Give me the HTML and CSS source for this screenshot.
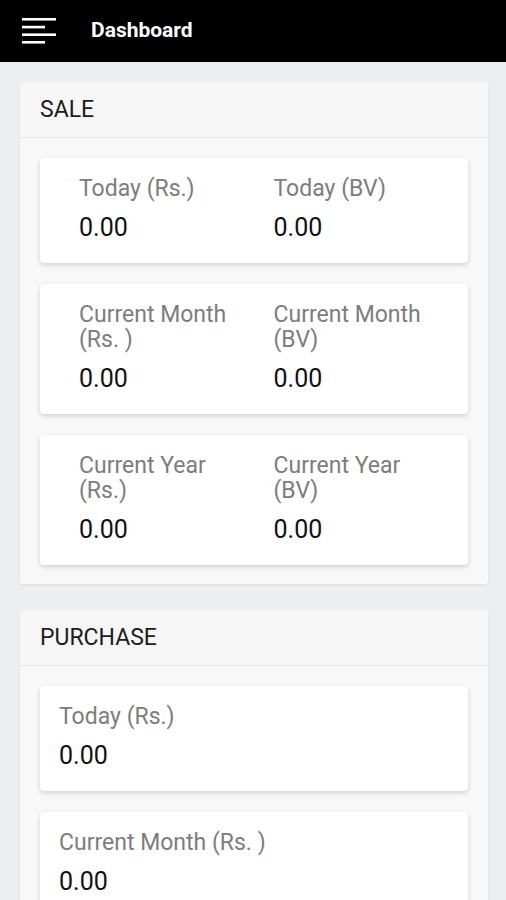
FILE: index.html
```html
<!DOCTYPE html>
<html lang="en">
<head>
    <meta charset="UTF-8">
    <meta name="viewport" content="width=device-width, initial-scale=1.0">
    <title>Dashboard</title>
    <link rel="stylesheet" href="styles.css">
</head>
<body>
    <div class="topbar">
        <svg class="menu-icon" width="36" height="28" viewBox="0 0 36 28">
            <rect x="0" y="2" width="34" height="2.6" fill="#fff"/>
            <rect x="0" y="9.8" width="23" height="2.6" fill="#fff"/>
            <rect x="0" y="17.4" width="34" height="2.6" fill="#fff"/>
            <rect x="0" y="25" width="23" height="2.6" fill="#fff"/>
        </svg>
        <span class="title">Dashboard</span>
    </div>

    <div class="content">
        <div class="panel">
            <div class="panel-head">SALE</div>
            <div class="panel-body">
                <div class="stat-card two-col">
                    <div class="stat">
                        <div class="label">Today (Rs.)</div>
                        <div class="value">0.00</div>
                    </div>
                    <div class="stat">
                        <div class="label">Today (BV)</div>
                        <div class="value">0.00</div>
                    </div>
                </div>
                <div class="stat-card two-col">
                    <div class="stat">
                        <div class="label">Current Month (Rs. )</div>
                        <div class="value">0.00</div>
                    </div>
                    <div class="stat">
                        <div class="label">Current Month (BV)</div>
                        <div class="value">0.00</div>
                    </div>
                </div>
                <div class="stat-card two-col">
                    <div class="stat">
                        <div class="label">Current Year (Rs.)</div>
                        <div class="value">0.00</div>
                    </div>
                    <div class="stat">
                        <div class="label">Current Year (BV)</div>
                        <div class="value">0.00</div>
                    </div>
                </div>
            </div>
        </div>

        <div class="panel">
            <div class="panel-head">PURCHASE</div>
            <div class="panel-body">
                <div class="stat-card one-col">
                    <div class="stat">
                        <div class="label">Today (Rs.)</div>
                        <div class="value">0.00</div>
                    </div>
                </div>
                <div class="stat-card one-col">
                    <div class="stat">
                        <div class="label">Current Month (Rs. )</div>
                        <div class="value">0.00</div>
                    </div>
                </div>
                <div class="stat-card one-col">
                    <div class="stat">
                        <div class="label">Current Year (Rs.)</div>
                        <div class="value">0.00</div>
                    </div>
                </div>
            </div>
        </div>
    </div>
</body>
</html>
```

FILE: styles.css
```css
body {
    margin: 0;
    font-family: Roboto, "Liberation Sans", Arial, sans-serif;
    background-color: #eceef0;
}
.topbar {
    height: 62px;
    background-color: #000;
    display: flex;
    align-items: center;
    padding-left: 22px;
    box-sizing: border-box;
}
.menu-icon {
    display: block;
    margin-top: -2px;
}
.title {
    color: #fff;
    font-size: 21px;
    font-weight: 700;
    margin-left: 33px;
    margin-top: -3px;
}
.content {
    padding: 20px 18px 20px 20px;
    display: flex;
    flex-direction: column;
    gap: 26px;
}
.panel {
    background-color: #f8f8f8;
    border-radius: 2px;
    box-shadow: 0 1px 3px rgba(0, 0, 0, 0.08);
}
.panel-head {
    height: 55px;
    display: flex;
    align-items: center;
    padding-left: 20px;
    font-size: 23px;
    color: #1c1c1c;
    background-color: #f6f6f6;
    border-bottom: 1px solid #e4e4e4;
}
.panel-body {
    padding: 20px 20px 19px 20px;
    display: flex;
    flex-direction: column;
    gap: 21px;
}
.stat-card {
    background-color: #fff;
    border-radius: 4px;
    box-shadow: 0 2px 5px rgba(0, 0, 0, 0.16);
    padding: 18px 0 20px 39px;
}
.two-col {
    display: grid;
    grid-template-columns: 1fr 1fr;
}
.one-col {
    padding-left: 19px;
}
.label {
    font-size: 23px;
    line-height: 25px;
    color: #7d7d7d;
    padding-right: 20px;
}
.value {
    font-size: 25px;
    line-height: 30px;
    color: #111;
    margin-top: 12px;
}
```
